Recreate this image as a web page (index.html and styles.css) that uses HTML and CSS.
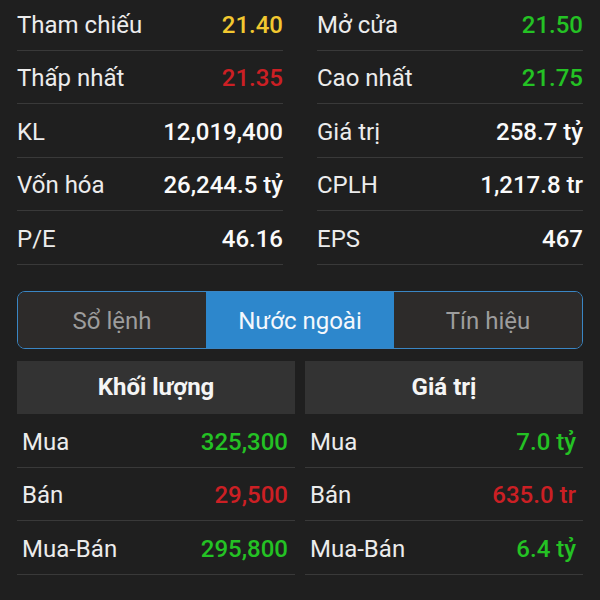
FILE: index.html
```html
<!DOCTYPE html>
<html lang="vi">
  <head>
    <meta charset="UTF-8" />
    <meta name="viewport" content="width=device-width, initial-scale=1.0" />
    <title>Thông tin cổ phiếu</title>
    <link rel="stylesheet" href="styles.css">
  </head>
  <body>
    <div class="container">
      <div class="stats">
        <div class="col">
          <div class="row"><span>Tham chiếu</span><b class="ref">21.40</b></div>
          <div class="row"><span>Thấp nhất</span><b class="down">21.35</b></div>
          <div class="row"><span>KL</span><b>12,019,400</b></div>
          <div class="row"><span>Vốn hóa</span><b>26,244.5 tỷ</b></div>
          <div class="row"><span>P/E</span><b>46.16</b></div>
        </div>
        <div class="col">
          <div class="row"><span>Mở cửa</span><b class="up">21.50</b></div>
          <div class="row"><span>Cao nhất</span><b class="up">21.75</b></div>
          <div class="row"><span>Giá trị</span><b>258.7 tỷ</b></div>
          <div class="row"><span>CPLH</span><b>1,217.8 tr</b></div>
          <div class="row"><span>EPS</span><b>467</b></div>
        </div>
      </div>

      <div class="tabs">
        <div class="tab">Sổ lệnh</div>
        <div class="tab active">Nước ngoài</div>
        <div class="tab">Tín hiệu</div>
      </div>

      <div class="foreign">
        <div class="panel">
          <div class="panel-head">Khối lượng</div>
          <div class="row"><span>Mua</span><b class="up">325,300</b></div>
          <div class="row"><span>Bán</span><b class="down">29,500</b></div>
          <div class="row"><span>Mua-Bán</span><b class="up">295,800</b></div>
        </div>
        <div class="panel">
          <div class="panel-head">Giá trị</div>
          <div class="row"><span>Mua</span><b class="up">7.0 tỷ</b></div>
          <div class="row"><span>Bán</span><b class="down">635.0 tr</b></div>
          <div class="row"><span>Mua-Bán</span><b class="up">6.4 tỷ</b></div>
        </div>
      </div>
    </div>
  </body>
</html>
```

FILE: styles.css
```css
html,
body {
  margin: 0;
  background: #1f1f1f;
}
body {
  font-family: Roboto, "Noto Sans", sans-serif;
  font-size: 24px;
  color: #ececec;
  overflow: hidden;
}
.container {
  width: 566px;
  padding: 0 17px;
}
.stats {
  display: grid;
  grid-template-columns: 1fr 1fr;
  column-gap: 34px;
  margin-top: -3px;
}
.row {
  display: flex;
  justify-content: space-between;
  align-items: center;
  height: 53.5px;
  padding-top: 3px;
  box-sizing: border-box;
  border-bottom: 1px solid #393939;
}
.row b {
  font-weight: 500;
  color: #fafafa;
}
.row .ref {
  color: #f2c830;
}
.row .up {
  color: #24c224;
}
.row .down {
  color: #cc1f24;
}
.tabs {
  display: grid;
  grid-template-columns: repeat(3, 1fr);
  margin-top: 26px;
  height: 58px;
  border: 1px solid #3a86c4;
  border-radius: 8px;
  overflow: hidden;
  box-sizing: border-box;
}
.tab {
  display: flex;
  align-items: center;
  justify-content: center;
  padding-top: 2px;
  background: #2d2b2a;
  color: #9d9d9d;
}
.tab.active {
  background: #2d87cc;
  color: #f4f8fc;
}
.foreign {
  display: grid;
  grid-template-columns: 1fr 1fr;
  column-gap: 10px;
  margin-top: 12px;
}
.panel-head {
  height: 53px;
  display: flex;
  align-items: center;
  justify-content: center;
  background: #333333;
  font-weight: 700;
  color: #f5f5f5;
}
.panel .row {
  padding: 3px 7px 0 5px;
  height: 54px;
}
.panel .row:nth-child(n + 3) {
  height: 53.5px;
}
```
